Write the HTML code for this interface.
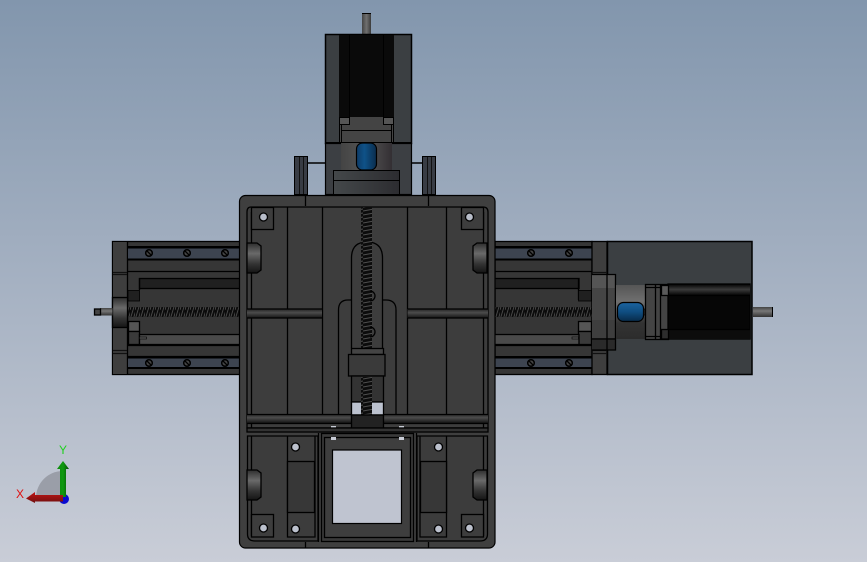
<!DOCTYPE html>
<html><head><meta charset="utf-8"><style>
html,body{margin:0;padding:0;width:867px;height:562px;overflow:hidden}
svg{display:block}
</style></head><body>
<svg width="867" height="562" viewBox="0 0 867 562" xmlns="http://www.w3.org/2000/svg">
<defs>
<linearGradient id="bg" x1="0" y1="0" x2="0" y2="1"><stop offset="0" stop-color="#8296ad"/><stop offset=".5" stop-color="#a5b1c2"/><stop offset="1" stop-color="#c9cdd7"/></linearGradient>
<linearGradient id="hubV" x1="0" y1="0" x2="0" y2="1"><stop offset="0" stop-color="#2e2e2e"/><stop offset=".35" stop-color="#6a6a6a"/><stop offset=".7" stop-color="#333"/><stop offset="1" stop-color="#141414"/></linearGradient>
<linearGradient id="coupV" x1="0" y1="0" x2="0" y2="1"><stop offset="0" stop-color="#555"/><stop offset=".3" stop-color="#6f6f6f"/><stop offset=".7" stop-color="#333"/><stop offset="1" stop-color="#2c2c2c"/></linearGradient>
<linearGradient id="coupH" x1="0" y1="0" x2="1" y2="0"><stop offset="0" stop-color="#444"/><stop offset=".5" stop-color="#555"/><stop offset="1" stop-color="#332f33"/></linearGradient>
<linearGradient id="baseH" x1="0" y1="0" x2="1" y2="0"><stop offset="0" stop-color="#44484a"/><stop offset="1" stop-color="#2c2c30"/></linearGradient>
<linearGradient id="blueH" x1="0" y1="0" x2="1" y2="0"><stop offset="0" stop-color="#0d3a66"/><stop offset=".4" stop-color="#0f5288"/><stop offset="1" stop-color="#0a2c4c"/></linearGradient>
<linearGradient id="blueV" x1="0" y1="0" x2="0" y2="1"><stop offset="0" stop-color="#1c64a0"/><stop offset=".5" stop-color="#0f4d80"/><stop offset="1" stop-color="#082a48"/></linearGradient>
<linearGradient id="shaftH" x1="0" y1="0" x2="1" y2="0"><stop offset="0" stop-color="#444"/><stop offset=".5" stop-color="#707070"/><stop offset="1" stop-color="#3a3a3a"/></linearGradient>
<linearGradient id="shaftV" x1="0" y1="0" x2="0" y2="1"><stop offset="0" stop-color="#444"/><stop offset=".4" stop-color="#777"/><stop offset="1" stop-color="#333"/></linearGradient>
<linearGradient id="band" x1="0" y1="0" x2="0" y2="1"><stop offset="0" stop-color="#222"/><stop offset=".4" stop-color="#4c4c4c"/><stop offset="1" stop-color="#141414"/></linearGradient>
<linearGradient id="motorBand" x1="0" y1="0" x2="0" y2="1"><stop offset="0" stop-color="#0c0c0c"/><stop offset=".45" stop-color="#3a3a3a"/><stop offset="1" stop-color="#080808"/></linearGradient>
<pattern id="screwH" width="5" height="10" patternUnits="userSpaceOnUse"><rect width="5" height="10" fill="#0c0c0c"/><path d="M0 10L3 0M3 10L6 0" stroke="#4a4a4a" stroke-width=".9"/></pattern>
<pattern id="screwV" width="11" height="4" patternUnits="userSpaceOnUse"><rect width="11" height="4" fill="#0c0c0c"/><path d="M0 3L11 1" stroke="#4e4e4e" stroke-width="1"/></pattern>
<linearGradient id="gGreen" x1="0" y1="0" x2="1" y2="0"><stop offset="0" stop-color="#0c8a0c"/><stop offset=".5" stop-color="#109a10"/><stop offset="1" stop-color="#055005"/></linearGradient>
<linearGradient id="gRed" x1="0" y1="0" x2="0" y2="1"><stop offset="0" stop-color="#c01515"/><stop offset="1" stop-color="#701010"/></linearGradient>
<g id="scr"><circle r="3.300" fill="#444" stroke="#000" stroke-width="1.500"/><path d="M-2 -2L2 2" stroke="#000"/></g>
<g id="knob"><path d="M0 0H10L14 3V27L10 30H0Z" fill="url(#hubV)" stroke="#000"/></g>
<g id="knobR"><path d="M14 0H4L0 3V27L4 30H14Z" fill="url(#hubV)" stroke="#000"/></g>
</defs>
<rect width="867" height="562" fill="url(#bg)"/>

<!-- top motor -->
<rect x="362" y="13" width="9" height="21" fill="url(#shaftH)"/><rect x="362" y="13" width="9" height="1" fill="#000"/>
<rect x="325.500" y="34.500" width="86" height="109" fill="#3b3f42" stroke="#000" stroke-width="1.500"/>
<rect x="339" y="35" width="55" height="82" fill="#0a0a0a"/>
<path d="M349.500 35V117M383.500 35V117" stroke="#000" stroke-width="1"/>
<rect x="340" y="117" width="53" height="26" fill="#444"/>
<rect x="339.500" y="117.500" width="10" height="7" fill="#555" stroke="#000"/>
<rect x="383.500" y="117.500" width="10" height="7" fill="#555" stroke="#000"/>
<path d="M341.500 124V142M391.500 124V142M339.500 125V142M393.500 125V142M341 130.500H392M326 142.500H411" stroke="#000" fill="none"/>
<rect x="325.500" y="143.500" width="86" height="51" fill="#3c3f43" stroke="#000" stroke-width="1.200"/>
<rect x="341" y="143" width="51" height="28" fill="url(#coupH)"/>
<rect x="356.500" y="143" width="20" height="27" rx="6" fill="url(#blueH)" stroke="#000" stroke-width="1.200"/>
<rect x="333.500" y="170.500" width="66" height="24" fill="url(#baseH)" stroke="#000"/>
<path d="M334 180.500H399" stroke="#000"/>
<!-- side knobs -->
<path d="M308 163H325M412 163H422.500" stroke="#000" stroke-width="1.500"/>
<rect x="294.500" y="156.500" width="13" height="38" fill="#383c44" stroke="#000"/>
<rect x="422.500" y="156.500" width="13" height="38" fill="#383c44" stroke="#000"/>
<path d="M299.500 157V194M303.500 157V194M427.500 157V194M431.500 157V194" stroke="#111"/>

<g stroke-width="1.300">
<!-- left rail -->
<rect x="112.500" y="241.500" width="128" height="133" fill="#363636" stroke="#000"/>
<rect x="113" y="242" width="15" height="132" fill="#3e3e3e"/>
<path d="M127.500 242V374" stroke="#000"/>
<path d="M113 272.500H127M113 274.500H127M113 350.500H127M113 353.500H127" stroke="#111"/>
<rect x="128" y="246" width="112" height="2.500" fill="#000"/>
<rect x="128" y="248.500" width="112" height="10" fill="#3d4450"/>
<rect x="128" y="258.500" width="112" height="2" fill="#000"/>
<use href="#scr" x="149" y="253"/><use href="#scr" x="187" y="253"/><use href="#scr" x="225" y="253"/>
<path d="M128 271.500H240" stroke="#000"/>
<rect x="139.500" y="278.500" width="101" height="10" fill="#202020" stroke="#000"/>
<path d="M139.500 278V290" stroke="#000"/>
<rect x="128" y="290.500" width="11.500" height="10.500" fill="#202020" stroke="#000" stroke-width=".8"/>
<rect x="128" y="307" width="112" height="10" fill="url(#screwH)"/>
<rect x="128.500" y="321.500" width="11" height="10" fill="#555" stroke="#000"/>
<rect x="128.500" y="331.500" width="11" height="13" fill="#3a3a3a" stroke="#000"/>
<rect x="139.500" y="334.500" width="101" height="10" fill="#4a4a4a" stroke="#000"/>
<rect x="139.500" y="337" width="7" height="2" fill="#555" stroke="#000" stroke-width=".6"/>
<path d="M128 345.500H240M128 356.500H240" stroke="#000"/>
<rect x="128" y="356" width="112" height="2.500" fill="#000"/>
<rect x="128" y="358.500" width="112" height="9" fill="#3d4450"/>
<rect x="128" y="367" width="112" height="2" fill="#000"/>
<use href="#scr" x="149" y="363"/><use href="#scr" x="187" y="363"/><use href="#scr" x="225" y="363"/>
<rect x="112.500" y="297.500" width="15" height="30" fill="url(#hubV)" stroke="#000"/>
<rect x="100" y="308" width="12.500" height="7.500" fill="url(#shaftV)"/>
<rect x="94.500" y="309" width="6" height="6" fill="#444" stroke="#000"/>

<!-- right rail + motor -->
<rect x="495" y="241.500" width="97" height="133" fill="#363636" stroke="#000"/>
<rect x="495" y="246" width="97" height="2.500" fill="#000"/>
<rect x="495" y="248.500" width="97" height="10" fill="#3d4450"/>
<rect x="495" y="258.500" width="97" height="2" fill="#000"/>
<use href="#scr" x="531" y="253"/><use href="#scr" x="569" y="253"/>
<path d="M495 271.500H592" stroke="#000"/>
<rect x="494" y="278.500" width="85" height="10" fill="#202020" stroke="#000"/>
<path d="M578.500 278V300" stroke="#000"/>
<rect x="578.500" y="290.500" width="13" height="10.500" fill="#202020" stroke="#000" stroke-width=".8"/>
<rect x="495" y="307" width="97" height="10" fill="url(#screwH)"/>
<rect x="578.500" y="321.500" width="13" height="10" fill="#555" stroke="#000"/>
<rect x="578.500" y="331.500" width="13" height="13" fill="#3a3a3a" stroke="#000"/>
<rect x="494" y="334.500" width="85" height="10" fill="#4a4a4a" stroke="#000"/>
<rect x="572" y="337" width="6.500" height="2" fill="#555" stroke="#000" stroke-width=".6"/>
<path d="M495 345.500H592" stroke="#000"/>
<rect x="495" y="356" width="97" height="2.500" fill="#000"/>
<rect x="495" y="358.500" width="97" height="9" fill="#3d4450"/>
<rect x="495" y="367" width="97" height="2" fill="#000"/>
<use href="#scr" x="531" y="363"/><use href="#scr" x="569" y="363"/>
<rect x="607.500" y="241.500" width="144.500" height="133" fill="#3b3f42" stroke="#000" stroke-width="1.500"/>
<rect x="592" y="241.500" width="15" height="133" fill="#3e3e3e" stroke="#000"/>
<path d="M592 272.500H607M592 274.500H607M592 350.500H607M592 353.500H607" stroke="#111"/>
<rect x="592" y="274.500" width="23.500" height="46" fill="#555"/>
<rect x="592" y="288" width="23.500" height="32" fill="#454545"/>
<rect x="592" y="320" width="23.500" height="18" fill="#3e3e3e"/>
<rect x="592" y="338" width="23.500" height="12" fill="#2a2a2a"/>
<path d="M592 274.500H615.500V350H592M607 274V350M592 339H615" stroke="#000" fill="none"/>
<rect x="616" y="285" width="30" height="54" fill="url(#coupV)"/>
<rect x="617.500" y="302.500" width="26" height="19" rx="6" fill="url(#blueV)" stroke="#000" stroke-width="1.200"/>
<rect x="643.500" y="309" width="2.500" height="6" fill="#222" stroke="#000" stroke-width=".6"/>
<rect x="645.500" y="284.500" width="23" height="55" fill="#444" stroke="#000"/>
<path d="M655.500 285V339M660.500 285V339M646 287.500H668M646 336.500H668" stroke="#000"/>
<rect x="668" y="284" width="82" height="55" fill="#060606" stroke="#000"/>
<rect x="668" y="285" width="82" height="10" fill="url(#motorBand)"/>
<rect x="668" y="330" width="82" height="9" fill="#0c0c0c"/>
<path d="M668 295.500H750M668 329.500H750" stroke="#000"/>
<rect x="661.500" y="285.500" width="7" height="10" fill="#5a5a5a" stroke="#000"/>
<rect x="661.500" y="329.500" width="7" height="9.500" fill="#2d2d2d" stroke="#000"/>
<rect x="753" y="307" width="20" height="10" fill="url(#shaftV)"/>
<rect x="772" y="307" width="1" height="10" fill="#000"/>

<!-- main plate -->
<rect x="239.500" y="195.500" width="255.500" height="352.500" rx="6" fill="#3f3f3f" stroke="#000" stroke-width="1.200"/>
<path d="M305.500 196V206M428.500 196V206" stroke="#000"/>
<path d="M251 207H483Q488 207 488 212V428H247V212Q247 207 251 207Z" fill="#3d3d3d" stroke="#000"/>
<path d="M251.500 212V428M483.500 212V428" stroke="#000"/>
<path d="M287.500 207V414M322.500 207V414M407.500 207V414M446.500 207V414" stroke="#000"/>
<!-- horizontal bands -->
<rect x="247" y="309" width="75" height="9" fill="url(#band)"/>
<rect x="407.500" y="309" width="80.500" height="9" fill="url(#band)"/>
<path d="M247 309H322M247 318H322M408 309H488M408 318H488" stroke="#000"/>
<!-- squares -->
<rect x="251.500" y="207.500" width="22" height="22" fill="#3d3d3d" stroke="#000"/>
<rect x="461.500" y="207.500" width="22" height="22" fill="#3d3d3d" stroke="#000"/>
<circle cx="263.500" cy="217" r="4" fill="#b8bdc9" stroke="#000"/>
<circle cx="469.500" cy="217" r="4" fill="#b8bdc9" stroke="#000"/>
<use href="#knob" x="247" y="243"/><use href="#knobR" x="473" y="243"/>
<!-- slots -->
<path d="M338.500 414V310Q338.500 300 348 300H386Q396 300 396 310V414" fill="none" stroke="#000"/>
<path d="M351.500 348V258C351.500 246 358 242 367 242C376 242 382.500 246 382.500 258V348" fill="#3d3d3d" stroke="#000"/>
<rect x="361" y="207" width="11" height="141" fill="url(#screwV)"/>
<path d="M370 291a5 5 0 0 1 0 10M370 327a5 5 0 0 1 0 10" fill="none" stroke="#000"/>
<rect x="351.500" y="348.500" width="32" height="6" fill="#444" stroke="#000"/>
<rect x="348.500" y="354.500" width="36.500" height="21.500" fill="#3a3a3a" stroke="#000"/>
<rect x="351.500" y="376" width="32" height="26" fill="#333" stroke="#000"/>
<rect x="351.500" y="402" width="32" height="13" fill="#bcc2cf" stroke="#000"/>
<rect x="361" y="377" width="11" height="38" fill="url(#screwV)"/>
<!-- lower band -->
<rect x="247" y="414" width="104" height="9" fill="url(#band)"/>
<rect x="383" y="414" width="105" height="9" fill="url(#band)"/>
<path d="M247 414.500H351M247 423.500H351M383 414.500H488M383 423.500H488M247 428H488" stroke="#000"/>
<rect x="351.500" y="415" width="32" height="13" fill="#222" stroke="#000"/>
<rect x="331" y="426" width="5" height="3" fill="#c8ccd6"/><rect x="399" y="426" width="5" height="3" fill="#c8ccd6"/>
<rect x="247" y="428" width="241" height="4" fill="#333" stroke="#000"/>

<!-- bottom panels -->
<path d="M247.500 436H318V541H255Q247.500 541 247.500 534Z" fill="#3c3c3c" stroke="#000"/>
<path d="M417 436H487.500V534Q487.500 541 480 541H417Z" fill="#3c3c3c" stroke="#000"/>
<path d="M251.500 436V536M483.500 436V536M287.500 436V537H315V436M446.500 436V537H420V436" fill="none" stroke="#000"/>
<rect x="287.500" y="461.500" width="27" height="51" fill="#373737" stroke="#000"/>
<rect x="420.500" y="461.500" width="26" height="51" fill="#373737" stroke="#000"/>
<rect x="321.500" y="433.500" width="92" height="108" fill="#3a3a3a" stroke="#000"/>
<rect x="324.500" y="437.500" width="86" height="100" fill="#3e3e3e" stroke="#000"/>
<path d="M318.500 433V542M416.500 433V542" stroke="#000"/>
<rect x="332.500" y="450" width="69" height="73.500" fill="#bfc4d0" stroke="#000" stroke-width="1.200"/>
<rect x="331" y="437" width="5" height="3" fill="#c8ccd6"/><rect x="399" y="437" width="5" height="3" fill="#c8ccd6"/>
<rect x="251.500" y="514.500" width="22" height="22.500" fill="#3d3d3d" stroke="#000"/>
<rect x="461.500" y="514.500" width="22" height="22.500" fill="#3d3d3d" stroke="#000"/>
<g fill="#bcc1cd" stroke="#000"><circle cx="263.500" cy="528" r="4"/><circle cx="469.500" cy="528" r="4"/><circle cx="295.500" cy="447" r="4"/><circle cx="295.500" cy="529" r="4"/><circle cx="438.500" cy="447" r="4"/><circle cx="438.500" cy="529" r="4"/></g>
<use href="#knob" x="247" y="470"/><use href="#knobR" x="473" y="470"/>
<path d="M305.500 542V548M428.500 542V548" stroke="#000"/>
</g>

<!-- triad -->
<path d="M63 498V471A27 27 0 0 0 36 498Z" fill="#9a9ea8"/>
<path d="M63 498V471A27 27 0 0 1 66 471V498Z" fill="#9a9ea8"/>
<circle cx="64" cy="499" r="5" fill="#0a0ad0"/>
<path d="M60 497V469H57L63 461L69 469H66V497Z" fill="url(#gGreen)"/>
<path d="M63 495H35V492L26 498.500L35 503V501.500H63Z" fill="url(#gRed)"/>
<text x="16" y="498" font-family="Liberation Sans, sans-serif" font-size="12" fill="#e01010">X</text>
<text x="59" y="454" font-family="Liberation Sans, sans-serif" font-size="12" fill="#20d020">Y</text>
</svg>
</body></html>
